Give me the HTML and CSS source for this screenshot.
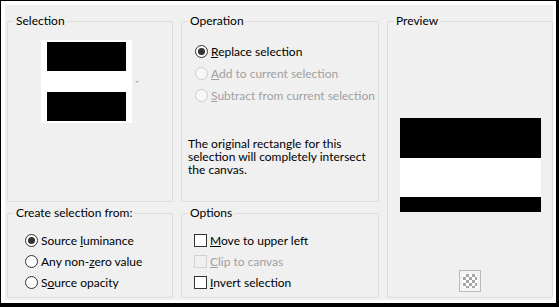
FILE: index.html
```html
<!DOCTYPE html>
<html lang="en">
<head>
    <meta charset="UTF-8">
    <title>Selection From Mask</title>
    <link rel="stylesheet" href="styles.css">
</head>
<body>
    <div class="dialog">
        <div class="panel">
            <fieldset class="group group-selection">
                <legend>Selection</legend>
                <div class="thumb-row">
                    <div class="thumb">
                        <div class="bar"></div>
                        <div class="thumb-gap"></div>
                        <div class="bar"></div>
                    </div>
                    <span class="drop-arrow"></span>
                </div>
            </fieldset>

            <fieldset class="group group-operation">
                <legend>Operation</legend>
                <div class="choices">
                    <label class="choice"><span class="radio checked"></span><span><u>R</u>eplace selection</span></label>
                    <label class="choice disabled"><span class="radio"></span><span><u>A</u>dd to current selection</span></label>
                    <label class="choice disabled"><span class="radio"></span><span><u>S</u>ubtract from current selection</span></label>
                </div>
                <p class="note">The original rectangle for this<br>selection will completely intersect<br>the canvas.</p>
            </fieldset>

            <fieldset class="group group-preview">
                <legend>Preview</legend>
                <div class="preview-body">
                    <div class="preview-img">
                        <div class="p-black-top"></div>
                        <div class="p-white"></div>
                        <div class="p-black-bottom"></div>
                    </div>
                    <span class="checker-btn"><span class="checker"></span></span>
                </div>
            </fieldset>

            <fieldset class="group group-source">
                <legend>Create selection from:</legend>
                <div class="choices choices-tight">
                    <label class="choice"><span class="radio checked"></span><span>Source <u>l</u>uminance</span></label>
                    <label class="choice"><span class="radio"></span><span>Any non-<u>z</u>ero value</span></label>
                    <label class="choice"><span class="radio"></span><span>S<u>o</u>urce opacity</span></label>
                </div>
            </fieldset>

            <fieldset class="group group-options">
                <legend>Options</legend>
                <div class="choices choices-tight">
                    <label class="choice"><span class="check"></span><span><u>M</u>ove to upper left</span></label>
                    <label class="choice disabled"><span class="check"></span><span><u>C</u>lip to canvas</span></label>
                    <label class="choice"><span class="check"></span><span><u>I</u>nvert selection</span></label>
                </div>
            </fieldset>
        </div>
    </div>
</body>
</html>
```

FILE: styles.css
```css
* {
    margin: 0;
    padding: 0;
    box-sizing: border-box;
}

body {
    font-family: 'Lato', 'Liberation Sans', sans-serif;
    font-size: 12px;
    color: #000;
    background: #fff;
}

.dialog {
    width: 559px;
    height: 307px;
    background: #fff;
    border-style: solid;
    border-color: #000;
    border-width: 1px 3px 4px 1px;
    padding: 4px 3px 3px 4px;
}

.panel {
    height: 100%;
    background: #f0f0f0;
    padding: 9px 0 0 2px;
    display: grid;
    grid-template-columns: 166px 198px 166px;
    grid-template-rows: 188px 92px;
    column-gap: 8px;
    row-gap: 4px;
}

/* group boxes */
.group {
    border: 1px solid #dcdcdc;
    border-radius: 2px;
    min-width: 0;
    padding: 0;
}

.group legend {
    margin-left: 6px;
    padding: 0 2px;
    line-height: 14px;
}

.group-selection { grid-column: 1; grid-row: 1; }
.group-operation { grid-column: 2; grid-row: 1; }
.group-preview   { grid-column: 3; grid-row: 1 / span 2; }
.group-source    { grid-column: 1; grid-row: 2; }
.group-options   { grid-column: 2; grid-row: 2; }

/* selection thumbnail */
.thumb-row {
    display: flex;
    align-items: center;
    gap: 3px;
    margin-top: 12px;
    padding-left: 33px;
}

.thumb {
    width: 91px;
    height: 83px;
    background: #fff;
    padding: 2px 6px;
}

.bar {
    height: 29px;
    background: #000;
}

.thumb-gap {
    height: 21px;
}

.drop-arrow {
    width: 0;
    height: 0;
    border-left: 2px solid transparent;
    border-right: 2px solid transparent;
    border-top: 2px solid #b4b4b4;
}

/* radio / checkbox rows */
.choices {
    margin-top: 12px;
    padding-left: 13px;
}

.choice {
    display: flex;
    align-items: center;
    gap: 3px;
    height: 22px;
    white-space: nowrap;
}

.choices-tight {
    margin-top: 10px;
}

.choices-tight .choice {
    height: 21px;
}

.group-source .choices {
    padding-left: 17px;
}

.group-options .choices {
    padding-left: 12px;
}

.choice.disabled {
    color: #a0a0a0;
}

.radio {
    position: relative;
    flex: none;
    width: 13px;
    height: 13px;
    border: 1px solid #333;
    border-radius: 50%;
    background: #fff;
}

.radio.checked::after {
    content: "";
    position: absolute;
    left: 2px;
    top: 2px;
    width: 7px;
    height: 7px;
    border-radius: 50%;
    background: #333;
}

.choice.disabled .radio {
    border-color: #cccccc;
    background: #f7f7f7;
}

.check {
    flex: none;
    width: 13px;
    height: 13px;
    border: 1px solid #333;
    background: #fff;
}

.choice.disabled .check {
    border-color: #d2d2d2;
    background: #f0f0f0;
}

.note {
    margin: 31px 0 0 6px;
    line-height: 13px;
}

/* preview */
.preview-body {
    display: flex;
    flex-direction: column;
    align-items: center;
}

.preview-img {
    width: 141px;
    margin-top: 90px;
}

.p-black-top {
    height: 40px;
    background: #000;
}

.p-white {
    height: 39px;
    background: #fff;
}

.p-black-bottom {
    height: 15px;
    background: #000;
}

.checker-btn {
    margin-top: 58px;
    width: 22px;
    height: 22px;
    border: 1px solid #b9b9b9;
    background: #f4f4f4;
    padding: 3px;
}

.checker {
    display: block;
    width: 14px;
    height: 14px;
    background: conic-gradient(#a6a6a6 25%, #fff 0 50%, #a6a6a6 0 75%, #fff 0) 0 0 / 6px 6px;
}
```
